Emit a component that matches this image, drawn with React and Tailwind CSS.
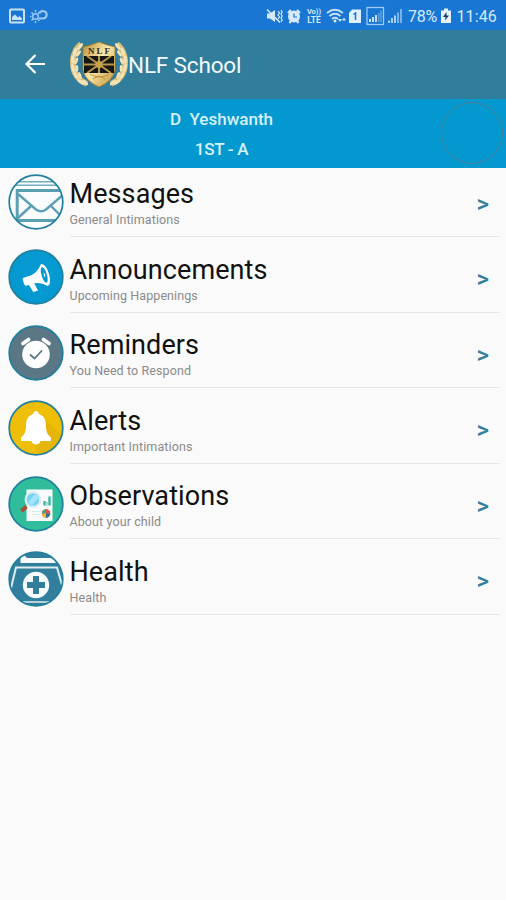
import React from "react";

const items = [
  { id: "messages", title: "Messages", hint: "General Intimations", Icon: MessagesIcon },
  { id: "announcements", title: "Announcements", hint: "Upcoming Happenings", Icon: AnnouncementsIcon },
  { id: "reminders", title: "Reminders", hint: "You Need to Respond", Icon: RemindersIcon },
  { id: "alerts", title: "Alerts", hint: "Important Intimations", Icon: AlertsIcon },
  { id: "observations", title: "Observations", hint: "About your child", Icon: ObservationsIcon },
  { id: "health", title: "Health", hint: "Health", Icon: HealthIcon },
];

// Round badge, every row icon is drawn inside it
function Badge({ id, fill, children }) {
  return (
    <svg viewBox="0 0 56 56" className="h-14 w-14 shrink-0">
      <clipPath id={id}>
        <circle cx="28" cy="28" r="26.8" />
      </clipPath>
      <circle cx="28" cy="28" r="27" fill={fill} />
      <g clipPath={`url(#${id})`}>{children}</g>
      <circle cx="28" cy="28" r="26.8" fill="none" stroke="#22809f" strokeWidth="1.7" />
    </svg>
  );
}

function MessagesIcon() {
  return (
    <Badge id="badge-messages" fill="#fafcfd">
      <g fill="none" stroke="#5b9fb5" strokeWidth="2.4">
        <path d="M10 7.8H46M6 11.3H50" stroke="#74adc0" strokeWidth="1.6" />
        <path d="M9.2 46V16.5H60" strokeWidth="3" />
        <path d="M7 46.5H52" strokeWidth="3.2" />
        <path d="M10 20L28 35.5Q33 39 38 35.5L56 20" />
        <path d="M10 44L23 32M56 45L43 32" />
      </g>
    </Badge>
  );
}

function AnnouncementsIcon() {
  return (
    <Badge id="badge-announcements" fill="#0499d0">
      <g transform="rotate(-17 28 28)">
        <path fill="#fff" fillRule="evenodd" d="M16 25Q14.5 25 14.5 27V31Q14.5 33.5 17 33.5H19L21 41.5H26L24.5 33.5Q31 34 36.5 40C43 40 43 17 36.5 17Q31 24 24 25ZM36.5 20.5C40 20.5 40 36.5 36.5 36.5C33 36.5 33 20.5 36.5 20.5Z" />
        <path d="M36.2 26Q39 28.5 36.2 31Z" fill="#fff" />
      </g>
    </Badge>
  );
}

function RemindersIcon() {
  return (
    <Badge id="badge-reminders" fill="#5b7685">
      <circle cx="28" cy="29.5" r="13.8" fill="#fff" />
      <g fill="none" strokeLinecap="round">
        <path d="M15 18.5L20.5 14.5M41 18.5L35.5 14.5" stroke="#fff" strokeWidth="3.8" />
        <path d="M22.5 30L26.5 33.5L33.5 26" stroke="#5b7685" strokeWidth="1.8" />
      </g>
    </Badge>
  );
}

function AlertsIcon() {
  return (
    <Badge id="badge-alerts" fill="#efbe06">
      <path d="M35 17L53 35V56H31L25 43Z" fill="#e6b509" />
      <path fill="#fff" d="M28 11C30 11 30.8 12.5 30.8 14C36 15.5 38 20 38 25C38 32 39 34 43 37.5V41H32.5C32 45.5 24 45.5 23.5 41H13V37.5C17 34 18 32 18 25C18 20 20 15.5 25.2 14C25.2 12.5 26 11 28 11Z" />
    </Badge>
  );
}

function ObservationsIcon() {
  return (
    <Badge id="badge-observations" fill="#2fbd9b">
      <path d="M18.5 13.5H44.5V45H18.5Z" fill="#f9fbfb" />
      <path d="M36.5 29.5V25M41.5 29.5V20.5" stroke="#37b79d" strokeWidth="2.4" />
      <path d="M39 29.5V26" stroke="#8fd5c6" strokeWidth="1.6" />
      <path d="M24 35.5H33M24 38.5H32" stroke="#dce7e8" strokeWidth="1" />
      <circle cx="38" cy="37.5" r="4.2" fill="#ee5240" />
      <path d="M38 37.5V33.3A4.2 4.2 0 0 1 42.2 37.5Z" fill="#ee5240" />
      <path d="M38 37.5H33.8A4.2 4.2 0 0 1 38 33.3Z" fill="#35a994" />
      <path d="M38 37.5H42.2A4.2 4.2 0 0 1 38 41.7Z" fill="#27799a" />
      <path d="M38 37.5V41.7A4.2 4.2 0 0 1 33.8 37.5Z" fill="#eeb735" />
      <path d="M18.5 30.5L13.5 35" stroke="#a94c38" strokeWidth="4" />
      <circle cx="25" cy="23.5" r="7.4" fill="#75d3f4" stroke="#dceef2" strokeWidth="2.2" />
      <path d="M20 26L27 18.5A7 7 0 0 1 31 22L23.5 29.5Z" fill="#a4e4fa" />
    </Badge>
  );
}

function HealthIcon() {
  return (
    <Badge id="badge-health" fill="#317f9d">
      <path d="M12.5 12V0H17V4.5Q17.5 7 20 7H44Q46.5 7.5 48 12Z" fill="#f7fbfc" />
      <path d="M3 37L8 16.5H49L54 34" fill="none" stroke="#deedf1" strokeWidth="2" />
      <path d="M15 51H41" stroke="#deedf1" strokeWidth="1.6" />
      <circle cx="28" cy="34" r="13.2" fill="#f7fbfc" />
      <path d="M28 25V43M19 34H37" stroke="#317f9d" strokeWidth="6" />
    </Badge>
  );
}

function Crest() {
  return (
    <svg viewBox="0 0 58 48" className="h-12 w-[58px] shrink-0">
      <defs>
        <linearGradient id="gold" x1="0" y1="0" x2="1" y2="1">
          <stop offset="0" stopColor="#b98a31" />
          <stop offset="0.45" stopColor="#fae9ac" />
          <stop offset="1" stopColor="#c09032" />
        </linearGradient>
        <clipPath id="shield-band">
          <path d="M14 15H44V32H14Z" />
        </clipPath>
        {/* one laurel branch, mirrored for the right side */}
        <g id="laurel">
          <path d="M11 3C0 11 -2 35 17 43" fill="none" stroke="#d9bd7b" strokeWidth="5.5" />
          <g fill="#f3e4b8">
            <ellipse cx="10" cy="5.5" rx="1.7" ry="4.2" transform="rotate(38 10 5.5)" />
            <ellipse cx="5" cy="11" rx="1.7" ry="4.2" transform="rotate(15 5 11)" />
            <ellipse cx="8.5" cy="12.5" rx="1.5" ry="3.6" transform="rotate(35 8.5 12.5)" />
            <ellipse cx="2.8" cy="18.5" rx="1.7" ry="4.2" />
            <ellipse cx="6.3" cy="20" rx="1.5" ry="3.6" transform="rotate(20 6.3 20)" />
            <ellipse cx="3" cy="27" rx="1.7" ry="4.2" transform="rotate(-12 3 27)" />
            <ellipse cx="6.8" cy="27.5" rx="1.5" ry="3.6" transform="rotate(2 6.8 27.5)" />
            <ellipse cx="6" cy="34.5" rx="1.7" ry="4.2" transform="rotate(-30 6 34.5)" />
            <ellipse cx="9.8" cy="34.5" rx="1.5" ry="3.6" transform="rotate(-18 9.8 34.5)" />
            <ellipse cx="11" cy="41" rx="1.7" ry="4.2" transform="rotate(-52 11 41)" />
            <ellipse cx="15" cy="41.5" rx="1.6" ry="3.8" transform="rotate(-50 15 41.5)" />
          </g>
        </g>
      </defs>
      <use href="#laurel" />
      <use href="#laurel" transform="translate(58 0) scale(-1 1)" />
      <path d="M13 6Q22 4 29 1Q36 4 45 6V29Q43 40 29 46Q15 40 13 29Z" fill="url(#gold)" stroke="#a67a27" strokeWidth="0.8" />
      <g clipPath="url(#shield-band)">
        <path d="M14 15H44V32H14Z" fill="#151715" />
        <path d="M29 15V32M14 23.5H44M17 15L41 32M41 15L17 32" stroke="#ba9546" strokeWidth="2" />
        <circle cx="29" cy="23.5" r="3.5" fill="#c9a34c" />
      </g>
      <path d="M20 33Q29 39 39 33M23 38L29 35L35 38" fill="none" stroke="#b88c37" strokeWidth="0.9" />
      <text x="30" y="13.3" textAnchor="middle" fontSize="9" fontWeight="700" letterSpacing="2" fontFamily="Liberation Serif, serif" fill="#33301f">NLF</text>
    </svg>
  );
}

function StatusBar() {
  return (
    <div className="flex h-[30px] items-center bg-[#1976d2] pt-px text-[#d7eafb]">
      <svg viewBox="0 0 16 16" className="ml-[9px] h-4 w-4 shrink-0" fill="none" stroke="#c9e2fa">
        <rect x="1" y="1.5" width="14" height="13" rx="1" strokeWidth="2" />
        <path d="M3 12V9L6 6.5L9 9.5L10.5 8L13 10.5V12Z" fill="#c9e2fa" stroke="none" />
      </svg>
      <svg viewBox="0 0 18 16" className="ml-[5px] h-4 w-[18px] shrink-0" fill="none" stroke="#9dcaf3" strokeWidth="1.5">
        <circle cx="5.5" cy="8.5" r="2.8" />
        <path d="M5.5 2V4M5.5 13V15M0 8.5H1.5M1.5 4.5L3 6M1.5 12.5L3 11M9.5 4L8 5.5M9.5 13L8 11.5" />
        <path d="M9 10.5H13A3.7 3.7 0 1 0 9.5 5.5" strokeWidth="2" />
      </svg>
      <svg viewBox="0 0 17 16" className="ml-[218px] h-4 w-[17px] shrink-0" fill="#d7eafb" stroke="#d7eafb">
        <path d="M1 5.5H4L9 2V14L4 10.5H1Z" stroke="none" />
        <path d="M1 1.5L14 14.5" strokeWidth="1.6" />
        <path d="M12 3L13.5 5L12 7L13.5 9L12 11M15 2L16.2 4L15 6L16.2 8L15 10L16.2 12L15 14" fill="none" strokeWidth="1.2" />
      </svg>
      <svg viewBox="0 0 16 16" className="ml-[3px] h-4 w-4 shrink-0" fill="#d7eafb">
        <circle cx="8" cy="8.5" r="6" />
        <path d="M2 5L5 2M14 5L11 2M3.5 15L5 13M12.5 15L11 13" stroke="#d7eafb" strokeWidth="2.2" />
        <path d="M8 5.5V9H11" fill="none" stroke="#1976d2" strokeWidth="1.2" />
      </svg>
      <div className="ml-1 flex w-4 shrink-0 flex-col items-center text-[7.5px] leading-[8px] font-bold">
        <span>Vo))</span>
        <span className="text-[8.5px]">LTE</span>
      </div>
      <svg viewBox="0 0 20 16" className="ml-1 h-4 w-5 shrink-0" fill="none" stroke="#c8e0f7" strokeWidth="1.7">
        <path d="M1 5Q9 -1.5 17 5M3.5 8Q9 3.5 14.5 8M6 11Q9 8.5 12 11" />
        <circle cx="9" cy="13" r="1.5" fill="#d7eafb" stroke="none" />
        <path d="M12 11H16L14 14ZM16 12.5L18 9.5L20 12.5Z" fill="#d7eafb" stroke="none" />
      </svg>
      <svg viewBox="0 0 14 16" className="ml-[2px] h-4 w-[14px] shrink-0">
        <path d="M4 1.5H13V15H1V5Z" fill="#deeffd" />
        <path d="M5.5 6.5L7.5 5V12" fill="none" stroke="#1976d2" strokeWidth="1.5" />
      </svg>
      <svg viewBox="0 0 19 20" className="ml-1 h-5 w-[19px] shrink-0">
        <rect x="1" y="1.5" width="16.5" height="17" fill="none" stroke="#9fcaf3" strokeWidth="1.3" />
        <path d="M4 16V13M7 16V11M10 16V9" stroke="#d7eafb" strokeWidth="1.8" />
        <path d="M12.7 16V7M15 16V4.5" stroke="#5c9fde" strokeWidth="1.6" />
      </svg>
      <svg viewBox="0 0 16 16" className="ml-[2px] h-4 w-4 shrink-0" strokeWidth="1.8">
        <path d="M2 15V12.5M5 15V10M8 15V7.5" stroke="#b9d9f7" />
        <path d="M11 15V4.5M14 15V1" stroke="#82b8eb" />
      </svg>
      <span className="ml-[5px] w-[30px] pt-[2px] text-[16px] tracking-[-0.3px]">78%</span>
      <svg viewBox="0 0 12 16" className="ml-[2px] h-4 w-3 shrink-0">
        <path d="M4 0.5H8V2.5H11V15H1V2.5H4Z" fill="#e4f2fe" />
        <path d="M6.5 4L3 9H5.5L5 12.5L9 7.5H6.5Z" fill="#173f66" />
      </svg>
      <span className="ml-[4.5px] pt-[2px] text-[16px] tracking-[0.1px]">11:46</span>
    </div>
  );
}

function AppBar() {
  return (
    <header className="flex h-[68.5px] items-center bg-[#317d9c]">
      <svg viewBox="0 0 22 20" className="ml-6 h-5 w-[22px] shrink-0" fill="none" stroke="#fff" strokeWidth="2.2">
        <path d="M21 10H3M11.5 1L2.5 10L11.5 19" />
      </svg>
      <div className="ml-6 flex items-center pt-px">
        <Crest />
        <h1 className="pt-px text-[22.5px] leading-6 tracking-[-0.15px] text-[#f1f9fc]">NLF School</h1>
      </div>
    </header>
  );
}

function StudentBanner() {
  return (
    <section className="relative flex h-[69px] flex-col items-center bg-[#0399d0] pt-[5px] pr-[63px] text-[17px] leading-[30.5px] font-medium text-[#d8f2fb]">
      <p className="whitespace-pre">D  Yeshwanth</p>
      <p className="tracking-[-0.3px]">1ST - A</p>
      <div className="absolute top-[3px] right-[3px] h-[62px] w-[62px] rounded-full border border-[#4f7d90]" />
    </section>
  );
}

function MenuRow({ item }) {
  const { Icon } = item;
  return (
    <li className="flex h-[75.5px] items-end pr-[6px] pl-2 first:h-[69.5px]">
      <div className="pb-[7.5px]">
        <Icon />
      </div>
      <div className="ml-[5.5px] flex h-[69px] flex-1 items-center justify-between border-b border-[#e5e6e7]">
        <div className="pt-[2px]">
          <h2 className="text-[27px] leading-[32px] tracking-[0.1px] text-[#111]">{item.title}</h2>
          <p className="mt-[2px] text-[12.5px] leading-4 tracking-[0.1px] text-[#8a8a8a]">{item.hint}</p>
        </div>
        <span className="mr-[11px] pt-[3px] text-[24px] leading-6 font-medium text-[#317f9d]">&gt;</span>
      </div>
    </li>
  );
}

export default function App() {
  return (
    <div className="h-[900px] w-[506px] overflow-hidden bg-[#fafafa] font-['Roboto',sans-serif]">
      <StatusBar />
      <AppBar />
      <StudentBanner />
      <ul>
        {items.map((item) => (
          <MenuRow key={item.id} item={item} />
        ))}
      </ul>
    </div>
  );
}
